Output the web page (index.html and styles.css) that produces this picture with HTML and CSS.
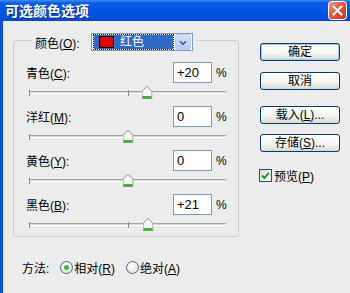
FILE: index.html
```html
<!DOCTYPE html>
<html lang="zh-CN">
<head>
  <meta charset="UTF-8" />
  <title>可选颜色选项</title>
  <link rel="stylesheet" href="styles.css">
</head>
<body>
  <div class="window">
    <div class="titlebar">
      <span class="title">可选颜色选项</span>
      <span class="close">
        <svg width="19" height="19" viewBox="0 0 19 19">
          <defs>
            <linearGradient id="closeGrad" x1="0" y1="0" x2="1" y2="1">
              <stop offset="0" stop-color="#f2a088" />
              <stop offset="0.45" stop-color="#e05a3c" />
              <stop offset="1" stop-color="#c33a1e" />
            </linearGradient>
          </defs>
          <rect x="0.5" y="0.5" width="18" height="18" rx="3" fill="url(#closeGrad)" stroke="#ffffff" />
          <path d="M5.5 5.5 L13.5 13.5 M13.5 5.5 L5.5 13.5" stroke="#ffffff" stroke-width="2" stroke-linecap="square" />
        </svg>
      </span>
    </div>

    <div class="dialog">
      <div class="left-col">
        <fieldset class="group">
          <legend class="legend">
            <div class="legend-inner">
              <span class="legend-label">颜色(<u>O</u>):</span>
              <span class="combo">
                <span class="combo-value"><span class="swatch"></span>红色</span>
                <span class="combo-btn">
                  <svg width="16" height="16" viewBox="0 0 16 16">
                    <path d="M4.5 6 L8 9.5 L11.5 6" fill="none" stroke="#4d6185" stroke-width="2" />
                  </svg>
                </span>
              </span>
            </div>
          </legend>

          <!-- каналы -->
          <div class="channel">
            <div class="channel-row">
              <span class="channel-name">青色(<u>C</u>):</span>
              <span class="num">+20</span>
              <span class="pct">%</span>
            </div>
            <div class="slider">
              <div class="track"></div>
              <span class="thumb" style="left: 60%"></span>
            </div>
          </div>

          <div class="channel">
            <div class="channel-row">
              <span class="channel-name">洋红(<u>M</u>):</span>
              <span class="num">0</span>
              <span class="pct">%</span>
            </div>
            <div class="slider">
              <div class="track"></div>
              <span class="thumb" style="left: 50%"></span>
            </div>
          </div>

          <div class="channel">
            <div class="channel-row">
              <span class="channel-name">黄色(<u>Y</u>):</span>
              <span class="num">0</span>
              <span class="pct">%</span>
            </div>
            <div class="slider">
              <div class="track"></div>
              <span class="thumb" style="left: 50%"></span>
            </div>
          </div>

          <div class="channel">
            <div class="channel-row">
              <span class="channel-name">黑色(<u>B</u>):</span>
              <span class="num">+21</span>
              <span class="pct">%</span>
            </div>
            <div class="slider">
              <div class="track"></div>
              <span class="thumb" style="left: 60.5%"></span>
            </div>
          </div>
        </fieldset>

        <div class="method">
          <span class="method-label">方法:</span>
          <span class="radio checked"></span>
          <span class="radio-text">相对(<u>R</u>)</span>
          <span class="radio"></span>
          <span class="radio-text">绝对(<u>A</u>)</span>
        </div>
      </div>

      <div class="right-col">
        <button class="btn btn-default">确定</button>
        <button class="btn btn-cancel">取消</button>
        <button class="btn btn-load">载入(<u>L</u>)...</button>
        <button class="btn btn-save">存储(<u>S</u>)...</button>
        <div class="preview">
          <span class="checkbox">
            <svg width="13" height="13" viewBox="0 0 13 13">
              <path d="M3 6.5 L5.3 9 L10 3.8" fill="none" stroke="#21a121" stroke-width="2" />
            </svg>
          </span>
          <span>预览(<u>P</u>)</span>
        </div>
      </div>
    </div>
  </div>
</body>
</html>
```

FILE: styles.css
```css
* {
  box-sizing: border-box;
}

html,
body {
  margin: 0;
}

body {
  width: 350px;
  height: 293px;
  overflow: hidden;
  font-family: "Liberation Sans", "Noto Sans CJK SC", sans-serif;
  font-size: 12px;
  color: #000;
  background: #ececec;
}

.window {
  display: flex;
  flex-direction: column;
  height: 293px;
}

.titlebar {
  height: 21px;
  flex-shrink: 0;
  display: flex;
  align-items: center;
  justify-content: space-between;
  padding: 0 3px 0 5px;
  background: linear-gradient(#3d8cf5 0, #0a5ce6 3px, #0055e5 50%, #0050dc 85%, #0045c4 100%);
}

.title {
  color: #fff;
  font-family: "Noto Sans CJK SC", sans-serif;
  font-weight: bold;
  font-size: 14px;
  line-height: 21px;
  text-shadow: 1px 1px #0c2a8a;
}

.close {
  display: flex;
  width: 19px;
  height: 19px;
}

.dialog {
  flex: 1;
  display: flex;
  gap: 21px;
  border-left: 3px solid #0c4fd4;
  padding: 8px 0 0 10px;
}

/* левая часть */
.left-col {
  width: 226px;
  display: flex;
  flex-direction: column;
}

.group {
  width: 226px;
  margin: 0;
  padding: 11px 12px 0 12px;
  border: 1px solid #d0d0c8;
  border-radius: 3px;
}

.legend {
  margin-left: 6px;
  padding: 4px 3px 0 3px;
}

.legend-inner {
  display: flex;
  align-items: center;
}

.legend-label {
  width: 56px;
}

.combo {
  width: 102px;
  height: 18px;
  display: flex;
  align-items: center;
  gap: 2px;
  padding: 1px 1px 1px 2px;
  border: 1px solid #7f9db9;
  background: #fff;
}

.combo-value {
  width: 79px;
  height: 14px;
  display: flex;
  align-items: center;
  gap: 6px;
  padding-left: 5px;
  color: #fff;
  background: #316ac5;
  outline: 1px dotted #1d1d1d;
  line-height: 14px;
}

.swatch {
  width: 15px;
  height: 12px;
  background: #e00000;
  border: 1px solid #000;
}

.combo-btn {
  width: 16px;
  height: 16px;
  display: flex;
  border-radius: 2px;
  background: linear-gradient(#d6e3fd, #b4c9f7);
  border: 1px solid #b9cdf5;
}

.channel-row {
  height: 21px;
  display: flex;
  align-items: center;
}

.channel-name {
  flex: 1;
}

.num {
  width: 39px;
  height: 21px;
  padding-left: 3px;
  border: 1px solid #7f9db9;
  background: #fff;
  font-size: 13px;
  line-height: 19px;
}

.pct {
  width: 10px;
  margin-left: 4px;
}

.slider {
  position: relative;
  height: 23px;
  padding-top: 8px;
  margin-left: 3px;
}

.channel:last-child .slider {
  height: 21px;
}

.track {
  position: relative;
  height: 3px;
  border-top: 1px solid #a2a2a2;
  border-bottom: 1px solid #ffffff;
  background: #d8d8d8;
}

.track::before,
.track::after {
  content: "";
  position: absolute;
  top: -2px;
  width: 1px;
  height: 6px;
  background: #8c8c8c;
}

.track::before {
  left: 0;
}

.track::after {
  left: 50%;
}

.thumb {
  position: absolute;
  top: 3px;
  width: 11px;
  height: 13px;
  transform: translateX(-50%);
  background: url("data:image/svg+xml,%3Csvg xmlns='http://www.w3.org/2000/svg' width='11' height='13'%3E%3Cpath d='M0.5 5 L5.5 0.5 L10.5 5 V12.5 H0.5 Z' fill='%23f6f6f2' stroke='%23909c90'/%3E%3Crect x='1' y='10' width='9' height='2.5' fill='%2339b039'/%3E%3C/svg%3E") no-repeat;
}

.method {
  display: flex;
  align-items: center;
  height: 16px;
  margin-top: 22px;
  padding-left: 9px;
}

.method-label {
  margin-right: 11px;
}

.radio {
  width: 13px;
  height: 13px;
  border-radius: 50%;
  border: 1px solid #3f6a9e;
  background: radial-gradient(circle at 40% 40%, #ffffff, #dcdcd8);
  display: flex;
  align-items: center;
  justify-content: center;
}

.radio.checked::after {
  content: "";
  width: 5px;
  height: 5px;
  border-radius: 50%;
  background: #3db53d;
}

.radio-text {
  margin-left: 1px;
  margin-right: 11px;
}

/* кнопки справа */
.right-col {
  width: 80px;
  display: flex;
  flex-direction: column;
  padding-top: 14px;
}

.btn {
  width: 80px;
  height: 18px;
  padding: 0;
  font-family: inherit;
  font-size: 12px;
  color: #000;
  border: 1px solid #003c74;
  border-radius: 3px;
  background: linear-gradient(#ffffff, #f3f3ef 60%, #d9d9d1);
  line-height: 16px;
}

.btn-default {
  box-shadow: inset 0 0 0 1px #a9c6f5;
}

.btn-cancel {
  margin-top: 11px;
}

.btn-load {
  margin-top: 16px;
}

.btn-save {
  margin-top: 10px;
}

.preview {
  display: flex;
  align-items: center;
  gap: 2px;
  margin-top: 15px;
  margin-left: -1px;
}

.checkbox {
  width: 13px;
  height: 13px;
  display: flex;
  border: 1px solid #1c5180;
  background: linear-gradient(135deg, #dcdcd6, #ffffff);
}

.checkbox svg {
  margin: -1px;
}
```
